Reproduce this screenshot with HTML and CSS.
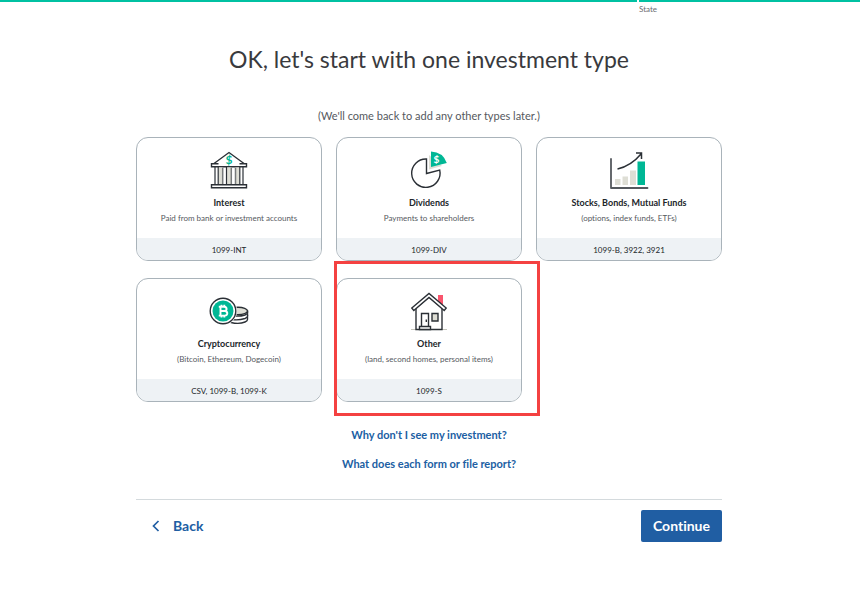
FILE: index.html
```
<!DOCTYPE html>
<html lang="en">
<head>
  <meta charset="UTF-8">
  <title>Investment type</title>
  <link rel="stylesheet" href="styles.css">
</head>
<body>

  <header class="progress">
    <div class="step"></div>
    <div class="step step-state">State</div>
  </header>

  <main class="content">
    <h1>OK, let's start with one investment type</h1>
    <p class="hint">(We'll come back to add any other types later.)</p>

    <div class="cards">
      <button type="button" class="card">
        <svg class="icon" viewBox="0 0 40 40" fill="none" stroke="#2b3036" stroke-width="1.4">
          <path d="M5 13.500 20 2.500l15 11" />
          <path fill="#fff" d="M9.500 13.700h-7v3h35v-3h-7" />
          <path fill="#deded5" stroke="none" d="M9.500 17.500H14v17H9.500zM17.500 17.500h5v17h-5zM26 17.500h4.500v17H26z" />
          <path stroke="#777a7b" stroke-width="1.500" d="M13.700 17.500v17M22.300 17.500v17M26.500 17.500v17" />
          <path stroke-width="1.200" d="M6 17v17.500M9.200 17v17.500M17.500 17v17.500M30.800 17v17.500M34 17v17.500" />
          <path fill="#fff" d="M2.500 34.700h35v3h-35z" />
          <text class="sign" x="20" y="14" font-size="12" fill="#00b795" stroke="none">$</text>
        </svg>
        <strong>Interest</strong>
        <span class="about">Paid from bank or investment accounts</span>
        <span class="form">1099-INT</span>
      </button>

      <button type="button" class="card">
        <svg class="icon" viewBox="0 0 40 40" fill="none" stroke="#2b3036" stroke-width="1.400">
          <path fill="#fff" d="M17.500 9A14.200 14.200 0 1 0 30.700 20L17.500 23.500z" />
          <path fill="#deded5" stroke="none" d="M20 5v14.500L33 16z" />
          <path fill="#00b795" stroke="none" d="M22 1.500Q34 2 37.800 13L22 17z" />
          <text class="sign" x="27.500" y="13" font-size="10" fill="#fff" stroke="none">$</text>
        </svg>
        <strong>Dividends</strong>
        <span class="about">Payments to shareholders</span>
        <span class="form">1099-DIV</span>
      </button>

      <button type="button" class="card">
        <svg class="icon" viewBox="0 0 40 40" fill="none">
          <path fill="#deded5" d="M6 29h5.500v6H6zM13.500 26.500h5.500V35h-5.500zM21 20.500h6V35h-6z" />
          <path fill="#00b795" d="M28.500 11.500h7.500V35h-7.500z" />
          <path stroke="#55595e" stroke-width="1.800" stroke-linecap="round" stroke-linejoin="round" d="M2 9v29h36.500" />
          <path stroke="#2b3036" stroke-width="1.500" d="M8.500 19Q22 16 32.500 3.500M27 3h5.500v6" />
        </svg>
        <strong>Stocks, Bonds, Mutual Funds</strong>
        <span class="about">(options, index funds, ETFs)</span>
        <span class="form">1099-B, 3922, 3921</span>
      </button>

      <button type="button" class="card">
        <svg class="icon" viewBox="0 0 40 40" fill="none" stroke="#2b3036" stroke-width="1.400">
          <path fill="#fff" d="M22 31.500q8 2 14-.5 2.500-1 2.500-2.500v-4H22z" />
          <path fill="#fff" d="M22 28.500q8 1 14-1 2.500-1 2.500-2.500v-4H22z" />
          <path fill="#fff" d="M20 24.500q10 1.500 16-.5 2.500-1 2.500-2.500V20H20z" />
          <ellipse cx="29" cy="20" rx="9.500" ry="3.800" fill="#deded5" />
          <circle cx="14" cy="20" r="14" fill="#fff" stroke="none" />
          <circle cx="14" cy="20" r="12.800" fill="#fff" />
          <circle cx="14" cy="20" r="10.500" fill="#00b795" stroke="none" />
          <path stroke="#fff" stroke-width="1.900" d="M9.800 15.700h5.500q2.300.3 2.300 2.200t-2.300 2.100h-4M11.300 20h4.500q2.500.2 2.500 2.300t-2.500 2.300h-6M11.500 15.700v9M12.500 13.800v2M15.300 13.800v2M12.500 24.500v2M15.300 24.500v2" />
        </svg>
        <strong>Cryptocurrency</strong>
        <span class="about">(Bitcoin, Ethereum, Dogecoin)</span>
        <span class="form">CSV, 1099-B, 1099-K</span>
      </button>

      <div class="picked">
        <button type="button" class="card">
          <svg class="icon" viewBox="0 -1 40 40" fill="none" stroke="#2b3036" stroke-width="1.400">
            <path fill="#f9556d" stroke="none" d="M29 3h5v11l-5-5z" />
            <path stroke="#c5c5bc" stroke-width="1" d="M2 37.500h36" />
            <path fill="#fff" d="M7 37.500V16L20 5l13 11v21.500z" />
            <path fill="#fff" d="M2.800 16 20 1.500 37.200 16l-2 2.500L20 5.500 4.800 18.500z" />
            <path fill="#fff" d="M12.500 21.500h7V35h-7z" />
            <path d="M17.300 27.500V30" />
            <path fill="#fff" d="M10.500 34.500h11v3h-11z" />
            <path fill="#deded5" d="M23 21.500h6v7.500h-6z" />
          </svg>
          <strong>Other</strong>
          <span class="about">(land, second homes, personal items)</span>
          <span class="form">1099-S</span>
        </button>
      </div>
    </div>

    <div class="links">
      <a href="#">Why don't I see my investment?</a>
      <a href="#">What does each form or file report?</a>
    </div>

    <footer class="actions">
      <button type="button" class="back">
        <svg class="chevron" viewBox="0 0 8 12" fill="none" stroke="#205ea3" stroke-width="1.700">
          <path d="M6.500 1 1.500 6l5 5" />
        </svg>
        Back
      </button>
      <button type="button" class="continue">Continue</button>
    </footer>
  </main>

</body>
</html>
```

FILE: styles.css
```
body {
  margin: 0;
  background: #fff;
  color: #21262a;
  font-family: Lato, "Open Sans", sans-serif;
  font-variant-ligatures: none;
}

button {
  font-family: inherit;
  font-variant-ligatures: inherit;
  color: inherit;
  cursor: pointer;
}

.progress {
  display: grid;
  grid-template-columns: 637fr 221fr;
  gap: 2px;
}

.step {
  border-top: 2px solid #00c1a2;
  height: 14px;
}

.step-state {
  font-size: 8px;
  line-height: 14px;
  color: #6b6c72;
}

.content {
  max-width: 586px;
  margin: 0 auto;
  padding-right: 2px;
}

h1 {
  margin: 27px 0 0;
  font-size: 23px;
  line-height: 32px;
  font-weight: 400;
  text-align: center;
  color: #393a3d;
}

.hint {
  margin: 33px 0 13px;
  font-size: 11px;
  line-height: 16px;
  text-align: center;
  color: #55595e;
}

.cards {
  display: grid;
  grid-template-columns: repeat(3, 1fr);
  gap: 17px 14px;
}

.card {
  display: flex;
  flex-direction: column;
  align-items: center;
  width: 100%;
  padding: 12px 0 0;
  background: #fff;
  border: 1px solid #a9b3ba;
  border-radius: 12px;
  overflow: hidden;
}

.icon {
  width: 40px;
  height: 40px;
}

.sign {
  font-weight: bold;
  text-anchor: middle;
}

.card strong {
  margin-top: 5px;
  font-size: 9px;
  line-height: 16px;
  font-weight: bold;
}

.about {
  font-size: 8px;
  line-height: 14px;
  color: #55595e;
}

.form {
  align-self: stretch;
  margin-top: 13px;
  padding-top: 2px;
  background: #eef2f5;
  font-size: 8px;
  line-height: 20px;
}

.picked {
  position: relative;
}

/* red frame around the highlighted card */
.picked::after {
  content: "";
  position: absolute;
  inset: -17px -18px -14px -2px;
  border: 3px solid #f44141;
  pointer-events: none;
}

.links {
  display: flex;
  flex-direction: column;
  align-items: center;
  gap: 13px;
  margin: 25px 0 27px;
}

.links a {
  font-size: 11px;
  line-height: 16px;
  font-weight: bold;
  color: #205ea3;
  text-decoration: none;
}

.actions {
  display: flex;
  justify-content: space-between;
  align-items: center;
  border-top: 1px solid #d4dadd;
  padding-top: 10px;
}

.back,
.continue {
  border: 0;
  font-size: 14px;
  line-height: 16px;
  font-weight: bold;
}

.back {
  display: flex;
  align-items: center;
  gap: 13px;
  padding: 8px 16px;
  background: none;
  color: #205ea3;
}

.chevron {
  width: 8px;
  height: 12px;
}

.continue {
  padding: 8px 12px;
  border-radius: 2px;
  background: #205ea3;
  color: #fff;
}
```
